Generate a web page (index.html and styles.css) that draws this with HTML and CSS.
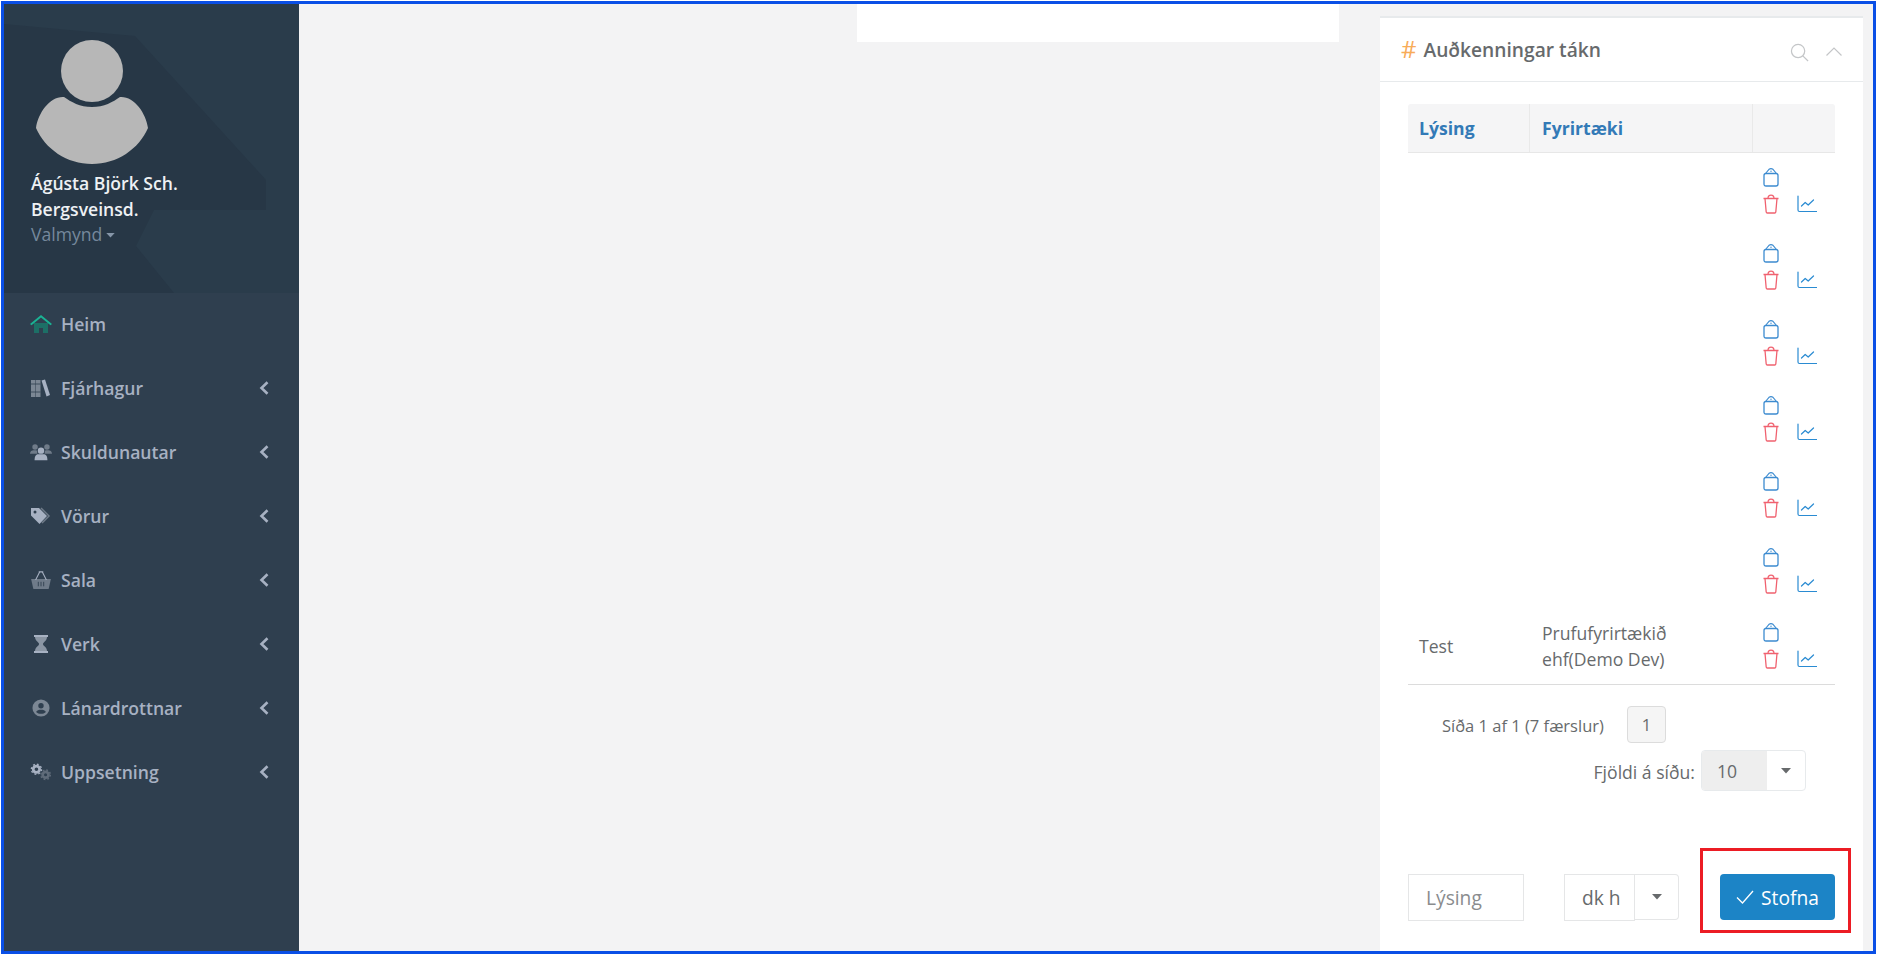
FILE: index.html
```html
<!DOCTYPE html>
<html lang="is">
<head>
<meta charset="utf-8">
<title>Auðkenningar tákn</title>
<link rel="stylesheet" href="styles.css">
</head>
<body>
<svg class="defs" width="0" height="0" aria-hidden="true">
  <symbol id="i-clip" viewBox="0 0 16 20"><path d="M3 6.500h10q2 0 2 2v8.500q0 2-2 2H3q-2 0-2-2V8.500q0-2 2-2z" fill="none" stroke="currentColor" stroke-width="1.300"/><path d="M2.500 6.500 6 2.300q2-1.300 4 0l3.500 4.200" fill="none" stroke="currentColor" stroke-width="1.100" stroke-linejoin="round"/><circle cx="8" cy="4.200" r=".7" fill="currentColor"/></symbol>
  <symbol id="i-trash" viewBox="0 0 16 20"><path d="M.5 4.500h15M2 4.500 3.200 18q.1 1 1.100 1h7.400q1 0 1.100-1L14 4.500M5 4.500q0-3.300 3-3.300t3 3.300" fill="none" stroke="currentColor" stroke-width="1.300" stroke-linejoin="round"/></symbol>
  <symbol id="i-chart" viewBox="0 0 20 18"><path d="M1 1v14q0 1.500 1.500 1.500H19.500M4.500 11l3.700-3.500 3 2.500 5.300-5" fill="none" stroke="currentColor" stroke-width="1.200" stroke-linejoin="round" stroke-linecap="round"/></symbol>
  <symbol id="i-chev" viewBox="0 0 10 14"><path d="M8.500 1.200 2.500 7l6 5.800" fill="none" stroke="currentColor" stroke-width="2.600"/></symbol>
  <symbol id="i-caret" viewBox="0 0 10 6"><path d="M0 0h10L5 5.500z" fill="currentColor"/></symbol>
</svg>
<div class="frame">
  <aside class="sidebar">
    <div class="profile">
      <svg class="profile-bg" viewBox="0 0 295 289" preserveAspectRatio="none" aria-hidden="true">
        <path d="M0 20 131 32 262 176V206H150L132 242 170 289H0z" fill="#273746"/>
      </svg>
      <svg class="avatar" viewBox="0 0 112 124" aria-hidden="true">
        <circle cx="56" cy="31" r="31" fill="#b7b7b7"/>
        <path d="M28 57c7 5 16 10 28 10s21-5 28-10c14-1 26 16 28 31-9 21-31 36-56 36S9 109 0 88c2-15 14-32 28-31z" fill="#b7b7b7"/>
      </svg>
      <div class="profile-name">Ágústa Björk Sch. Bergsveinsd.</div>
      <div class="profile-menu">Valmynd <svg class="caret-sm"><use href="#i-caret"/></svg></div>
    </div>
    <nav class="nav">
      <a class="nav-item">
        <svg class="nav-icon" viewBox="0 0 22 18"><path d="M4 8h14v10h-5v-5H9v5H4z" fill="#1d6f66"/><path d="M0 9 11 0l11 9-1.500 1.200L11 2.400 1.500 10.200z" fill="#1ab394"/></svg>
        <span class="nav-label">Heim</span>
      </a>
      <a class="nav-item">
        <svg class="nav-icon" viewBox="0 0 22 18"><g fill="#7c8794"><path d="M1 1h4.500v17H1zM6 1h4.500v17H6z"/></g><path d="M11.500 1.500 15 .5l5 15.500-3.500 1.500z" fill="#a7b1c2"/><path d="M1 5h9.500M1 13h9.500" stroke="#2f3f4f" stroke-width=".8"/></svg>
        <span class="nav-label">Fjárhagur</span>
        <svg class="chev"><use href="#i-chev"/></svg>
      </a>
      <a class="nav-item">
        <svg class="nav-icon" viewBox="0 0 24 18"><g fill="#6f7b89"><circle cx="5.500" cy="3.500" r="3"/><circle cx="18.500" cy="3.500" r="3"/><path d="M0 11c0-3 2-4 4-4h3c1 1 1 2 1 4zM24 11c0-3-2-4-4-4h-3c-1 1-1 2-1 4z"/></g><g fill="#a7b1c2"><circle cx="12" cy="7.500" r="3.500"/><path d="M5 18c0-5 2-6.500 4-6.500h6c2 0 4 1.500 4 6.500z"/></g></svg>
        <span class="nav-label">Skuldunautar</span>
        <svg class="chev"><use href="#i-chev"/></svg>
      </a>
      <a class="nav-item">
        <svg class="nav-icon" viewBox="0 0 22 18"><path d="M11 1l8 8-7 7" fill="none" stroke="#6f7b89" stroke-width="1.500"/><path d="M1 1h8l8 8-7.500 8L1 8.500z" fill="#a7b1c2"/><circle cx="5" cy="5" r="1.500" fill="#2f3f4f"/></svg>
        <span class="nav-label">Vörur</span>
        <svg class="chev"><use href="#i-chev"/></svg>
      </a>
      <a class="nav-item">
        <svg class="nav-icon" viewBox="0 0 22 20"><path d="M0 9h22l-2.500 11h-17z" fill="#6f7b89"/><path d="M5 10 9.500 1M17 10 12.500 1M8.500 1h5" stroke="#a7b1c2" stroke-width="1.200" fill="none"/><path d="M8 12v5M11 12v5M14 12v5" stroke="#2f3f4f"/></svg>
        <span class="nav-label">Sala</span>
        <svg class="chev"><use href="#i-chev"/></svg>
      </a>
      <a class="nav-item">
        <svg class="nav-icon" viewBox="0 0 22 18"><path d="M4 0h14v2H4zM4 16h14v2H4z" fill="#a7b1c2"/><path d="M5 2h12c0 4-4 5-4 7s4 3 4 7H5c0-4 4-5 4-7S5 6 5 2z" fill="#8a95a3"/></svg>
        <span class="nav-label">Verk</span>
        <svg class="chev"><use href="#i-chev"/></svg>
      </a>
      <a class="nav-item">
        <svg class="nav-icon" viewBox="0 0 22 20"><circle cx="11" cy="10" r="9.500" fill="#7c8794"/><circle cx="11" cy="7.500" r="3" fill="#2f3f4f"/><path d="M5.500 14.500c1-2 3-2.500 5.500-2.500s4.500.5 5.500 2.500c-1.500 1.500-3.500 2-5.500 2s-4-.5-5.500-2z" fill="#2f3f4f"/></svg>
        <span class="nav-label">Lánardrottnar</span>
        <svg class="chev"><use href="#i-chev"/></svg>
      </a>
      <a class="nav-item">
        <svg class="nav-icon" viewBox="0 0 24 18"><circle cx="7" cy="6" r="3.500" fill="none" stroke="#a7b1c2" stroke-width="3"/><circle cx="7" cy="6" r="5.500" fill="none" stroke="#a7b1c2" stroke-width="1.500" stroke-dasharray="2 2.300"/><circle cx="17" cy="12" r="3.200" fill="none" stroke="#5f6b79" stroke-width="3"/><circle cx="17" cy="12" r="5.200" fill="none" stroke="#5f6b79" stroke-width="1.500" stroke-dasharray="2 2.100"/></svg>
        <span class="nav-label">Uppsetning</span>
        <svg class="chev"><use href="#i-chev"/></svg>
      </a>
    </nav>
  </aside>
  <main class="main">
    <div class="top-box"></div>
    <section class="panel">
      <header class="panel-head">
        <h2 class="panel-title"><span class="hash">#</span> Auðkenningar tákn</h2>
        <svg class="tool-search" viewBox="0 0 20 20" aria-hidden="true"><circle cx="8.500" cy="8.500" r="7" fill="none" stroke="#c4c6c8" stroke-width="1.300"/><path d="M13.500 13.500 19 19" stroke="#c4c6c8" stroke-width="1.300"/></svg>
        <svg class="tool-up" viewBox="0 0 16 9" aria-hidden="true"><path d="M.5 8.500 8 1l7.500 7.500" fill="none" stroke="#c4c6c8" stroke-width="1.200"/></svg>
      </header>
      <div class="panel-body">
        <div class="table">
          <div class="tr th-row">
            <div class="th col-desc">Lýsing</div>
            <div class="th col-comp">Fyrirtæki</div>
            <div class="th col-act"></div>
          </div>
          <div class="tr"><div class="td col-desc"></div><div class="td col-comp"></div><div class="td col-act"><div class="acts"><svg class="ic-clip"><use href="#i-clip"/></svg><span></span><svg class="ic-trash"><use href="#i-trash"/></svg><svg class="ic-chart"><use href="#i-chart"/></svg></div></div></div>
          <div class="tr"><div class="td col-desc"></div><div class="td col-comp"></div><div class="td col-act"><div class="acts"><svg class="ic-clip"><use href="#i-clip"/></svg><span></span><svg class="ic-trash"><use href="#i-trash"/></svg><svg class="ic-chart"><use href="#i-chart"/></svg></div></div></div>
          <div class="tr"><div class="td col-desc"></div><div class="td col-comp"></div><div class="td col-act"><div class="acts"><svg class="ic-clip"><use href="#i-clip"/></svg><span></span><svg class="ic-trash"><use href="#i-trash"/></svg><svg class="ic-chart"><use href="#i-chart"/></svg></div></div></div>
          <div class="tr"><div class="td col-desc"></div><div class="td col-comp"></div><div class="td col-act"><div class="acts"><svg class="ic-clip"><use href="#i-clip"/></svg><span></span><svg class="ic-trash"><use href="#i-trash"/></svg><svg class="ic-chart"><use href="#i-chart"/></svg></div></div></div>
          <div class="tr"><div class="td col-desc"></div><div class="td col-comp"></div><div class="td col-act"><div class="acts"><svg class="ic-clip"><use href="#i-clip"/></svg><span></span><svg class="ic-trash"><use href="#i-trash"/></svg><svg class="ic-chart"><use href="#i-chart"/></svg></div></div></div>
          <div class="tr"><div class="td col-desc"></div><div class="td col-comp"></div><div class="td col-act"><div class="acts"><svg class="ic-clip"><use href="#i-clip"/></svg><span></span><svg class="ic-trash"><use href="#i-trash"/></svg><svg class="ic-chart"><use href="#i-chart"/></svg></div></div></div>
          <div class="tr tr-last"><div class="td col-desc">Test</div><div class="td col-comp">Prufufyrirtækið ehf(Demo Dev)</div><div class="td col-act"><div class="acts"><svg class="ic-clip"><use href="#i-clip"/></svg><span></span><svg class="ic-trash"><use href="#i-trash"/></svg><svg class="ic-chart"><use href="#i-chart"/></svg></div></div></div>
        </div>
        <div class="pager">
          <span class="pager-info">Síða 1 af 1 (7 færslur)</span>
          <span class="page-btn">1</span>
        </div>
        <div class="page-size">
          <span class="page-size-label">Fjöldi á síðu:</span>
          <div class="page-select">
            <span class="page-select-value">10</span>
            <span class="page-select-arrow"><svg class="caret"><use href="#i-caret"/></svg></span>
          </div>
        </div>
        <form class="create">
          <div class="desc-input">Lýsing</div>
          <div class="type-select">
            <span class="type-value">dk h</span>
            <span class="type-arrow"><svg class="caret"><use href="#i-caret"/></svg></span>
          </div>
          <div class="create-action">
            <span class="btn-create"><svg class="btn-check" viewBox="0 0 18 14" aria-hidden="true"><path d="M1 7.500 6.500 13 17 1" fill="none" stroke="#fff" stroke-width="1.300"/></svg> Stofna</span>
            <span class="highlight"></span>
          </div>
        </form>
      </div>
    </section>
  </main>
</div>
</body>
</html>
```
FILE: styles.css
```css
* { box-sizing: border-box; }
html, body { margin: 0; padding: 0; }
body {
  background: #fff;
  font-family: "Open Sans", "Noto Sans", sans-serif;
  color: #676a6c;
  overflow: hidden;
}
.defs { position: absolute; }
svg { display: block; }

.frame {
  display: flex;
  width: 1875px;
  height: 953px;
  margin-top: 1px;
  margin-left: 1px;
  border: 3px solid #0a4fe6;
  background: #f3f3f4;
  overflow: hidden;
}

/* Sidebar */
.sidebar {
  flex: 0 0 295px;
  background: #2f3f4f;
}
.profile {
  position: relative;
  height: 289px;
  padding: 36px 26px 0 27px;
  background: #2a3c4b;
}
.profile-bg {
  position: absolute;
  left: 0;
  top: 0;
  width: 100%;
  height: 100%;
}
.avatar {
  position: relative;
  width: 112px;
  height: 124px;
  margin-left: 5px;
}
.profile-name {
  position: relative;
  width: 190px;
  margin-top: 6px;
  font-size: 17.600px;
  line-height: 26px;
  font-weight: 600;
  color: #eef1f4;
}
.profile-menu {
  position: relative;
  display: flex;
  align-items: center;
  gap: 4px;
  font-size: 17.600px;
  line-height: 24px;
  color: #75889c;
}
.caret-sm { width: 9px; height: 5px; margin-top: 2px; color: #8696a8; }

.nav-item {
  display: flex;
  align-items: center;
  height: 64px;
  padding: 0 30px 2px 26px;
}
.nav-icon { flex: 0 0 auto; width: 22px; height: 18px; margin-right: 9px; }
.nav-label {
  flex: 1;
  font-size: 17.600px;
  font-weight: 600;
  color: #a7b1c2;
}
.chev { width: 10px; height: 14px; color: #a7b1c2; }

/* Main */
.main {
  position: relative;
  flex: 1;
  display: flex;
  align-items: flex-start;
  padding-left: 558px;
  gap: 41px;
}
.top-box {
  flex: 0 0 482px;
  height: 38px;
  background: #fff;
}
.panel {
  flex: 0 0 483px;
  height: 936px;
  margin-top: 12px;
  border-top: 2px solid #e7eaec;
  background: #fff;
}
.panel-head {
  display: flex;
  align-items: center;
  height: 64px;
  padding: 0 24px 0 21px;
  border-bottom: 1px solid #e7eaec;
}
.panel-title {
  flex: 1;
  margin: 0;
  padding-top: 1px;
  font-size: 19.200px;
  font-weight: 600;
  line-height: 26px;
  color: #676a6c;
}
.hash { margin-right: 2px; color: #f8ac59; font-weight: 400; font-size: 24px; line-height: 1; vertical-align: -1px; }
.tool-search { width: 19px; height: 19px; margin-top: 5px; margin-right: 17px; }
.tool-up { width: 16px; height: 9px; margin-top: 3px; margin-right: -3px; }

.panel-body { padding: 22px 28px 0; }
.table { width: 427px; }
.tr { display: flex; height: 76px; }
.th-row {
  height: 49px;
  background: #f5f5f6;
  border-bottom: 1px solid #e7e7e7;
  border-radius: 3px 3px 0 0;
}
.tr-last { border-bottom: 1px solid #dcdcdc; height: 76px; }
.col-desc { flex: 0 0 122px; }
.col-comp { flex: 0 0 223px; }
.col-act { flex: 0 0 82px; }
.th {
  display: flex;
  align-items: center;
  padding-left: 11px;
  font-size: 17.600px;
  font-weight: 700;
  color: #337ab7;
}
.col-desc.th, .col-comp.th { border-right: 1px solid #e9e9e9; }
.col-comp.th { padding-left: 12px; }
.td {
  display: flex;
  align-items: center;
  padding-left: 11px;
  font-size: 17.600px;
  line-height: 25.500px;
}
.col-comp.td { padding-left: 12px; padding-right: 60px; }
.acts {
  display: grid;
  grid-template-columns: 16px 20px;
  column-gap: 18px;
  row-gap: 7px;
  align-items: center;
  margin-left: -1px;
  margin-top: -2px;
}
.ic-clip { width: 16px; height: 20px; color: #3c8bd0; }
.ic-trash { width: 16px; height: 20px; color: #f0616f; }
.ic-chart { width: 20px; height: 18px; color: #2a8bd2; }

.pager {
  display: flex;
  align-items: center;
  height: 38px;
  margin-top: 20px;
  padding-left: 34px;
  font-size: 16.500px;
}
.pager-info { width: 185px; padding-top: 2px; }
.page-btn {
  display: flex;
  align-items: center;
  justify-content: center;
  width: 39px;
  height: 37px;
  border: 1px solid #dcdcdc;
  border-radius: 4px;
  background: #f5f5f5;
  font-size: 16.500px;
}
.page-size {
  display: flex;
  align-items: center;
  justify-content: flex-end;
  gap: 6px;
  margin-top: 7px;
  padding-right: 29px;
  font-size: 17.600px;
}
.page-size-label { padding-top: 2px; }
.page-select {
  display: flex;
  width: 105px;
  height: 41px;
  border: 1px solid #e7eaec;
  border-radius: 4px;
  overflow: hidden;
}
.page-select-value {
  display: flex;
  align-items: center;
  width: 65px;
  padding-left: 15px;
  background: #eee;
}
.page-select-arrow {
  flex: 1;
  display: flex;
  align-items: center;
  justify-content: center;
}
.caret { width: 10px; height: 6px; color: #676a6c; }

.create {
  display: flex;
  align-items: flex-start;
  margin-top: 83px;
  font-size: 19.200px;
}
.desc-input {
  display: flex;
  align-items: center;
  width: 116px;
  height: 47px;
  padding-left: 17px;
  border: 1px solid #e5e6e7;
  color: #8a8c8e;
}
.type-select {
  display: flex;
  width: 115px;
  height: 47px;
  margin-left: 40px;
}
.type-value {
  display: flex;
  align-items: center;
  width: 71px;
  padding-left: 17px;
  border: 1px solid #e5e6e7;
}
.type-arrow {
  flex: 1;
  display: flex;
  align-items: center;
  justify-content: center;
  height: 46px;
  border: 1px solid #e5e6e7;
  border-left: 0;
  border-radius: 0 4px 4px 0;
}
.create-action { position: relative; margin-left: 41px; }
.btn-create {
  display: flex;
  align-items: center;
  justify-content: center;
  gap: 7px;
  width: 115px;
  height: 46px;
  border-radius: 4px;
  background: #1c84c6;
  color: #fff;
  font-size: 19.200px;
}
.btn-check { width: 18px; height: 14px; }
.highlight {
  position: absolute;
  left: -20px;
  top: -26px;
  width: 151px;
  height: 85px;
  border: 3px solid #ec1c24;
  pointer-events: none;
}
```
